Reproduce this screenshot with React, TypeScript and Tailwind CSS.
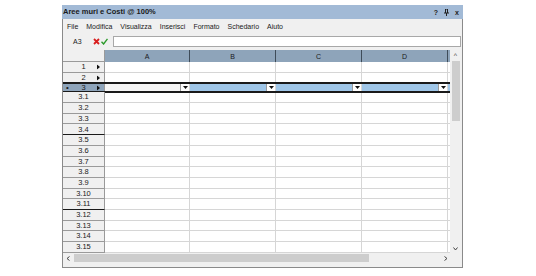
import React from 'react';

const rows = ['1', '2', '3', '3.1', '3.2', '3.3', '3.4', '3.5', '3.6', '3.7', '3.8', '3.9', '3.10', '3.11', '3.12', '3.13', '3.14', '3.15'];
const menu = ['File', 'Modifica', 'Visualizza', 'Inserisci', 'Formato', 'Schedario', 'Aiuto'];
const cols = [
  { label: 'A', cls: 'w-[85px]' },
  { label: 'B', cls: 'w-[86px]' },
  { label: 'C', cls: 'w-[86px]' },
  { label: 'D', cls: 'w-[86px]' },
];

function Arrow() {
  return (
    <svg width="4" height="5" viewBox="0 0 4 5" className="absolute right-[3px] top-1/2 -translate-y-1/2">
      <path d="M0 0 L3 2.5 L0 5 Z" fill="#111" />
    </svg>
  );
}

function Dropdown() {
  return (
    <div className="ml-auto h-full w-[9px] bg-white border-l border-[#9a9a9a] flex items-center justify-center">
      <svg width="5" height="3" viewBox="0 0 5 3">
        <path d="M0 0 H5 L2.5 3 Z" fill="#111" />
      </svg>
    </div>
  );
}

export default function App() {
  return (
    <div className="w-[536px] h-[276px] bg-white relative" style={{ fontFamily: '"Liberation Sans", Arial, sans-serif' }}>
      <div className="absolute left-[62px] top-[5px] w-[401px] h-[263px] border border-[#8a8a8a] border-t-0 flex flex-col bg-[#f0f0f0]">
        {/* title bar */}
        <div className="h-[14px] bg-[#a2bad6] flex items-center pl-[1px] pr-[4px] -mx-px">
          <span className="text-[7.5px] font-bold text-[#1a1a1a] leading-none">Aree muri e Costi @ 100%</span>
          <div className="ml-auto flex items-center gap-[6px] text-[7px] font-bold text-[#222] leading-none">
            <span>?</span>
            <svg width="5" height="7" viewBox="0 0 5 7">
              <path d="M1 0 H4 M1.5 0 V4 M3.5 0 V4 M0 4 H5 M2.5 4 V7" stroke="#222" strokeWidth="1" fill="none" />
            </svg>
            <span>x</span>
          </div>
        </div>
        {/* menu */}
        <div className="h-[14px] flex items-center gap-[8px] pl-[4px] text-[7px] text-[#1a1a1a] leading-none">
          {menu.map(m => (
            <span key={m}>{m}</span>
          ))}
        </div>
        {/* formula bar */}
        <div className="h-[17px] flex items-center">
          <span className="w-[30px] text-left text-[7px] text-[#222] leading-none pl-[10px]">A3</span>
          <svg width="7" height="7" viewBox="0 0 7 7">
            <path d="M1 1 L6 6 M6 1 L1 6" stroke="#d81e1e" strokeWidth="1.8" />
          </svg>
          <svg width="7" height="7" viewBox="0 0 7 7" className="ml-[1px]">
            <path d="M0.5 3.8 L2.6 6 L6.5 0.8" stroke="#2a9a2a" strokeWidth="1.4" fill="none" />
          </svg>
          <div className="ml-[5px] mr-[1px] flex-1 h-[11px] bg-white border border-[#a8a8a8]" />
        </div>
        {/* grid */}
        <div className="flex">
          <div className="w-[387px] bg-white">
            {/* header */}
            <div className="flex h-[12px]">
              <div className="w-[42px] bg-[#f0f0f0] border-r border-b border-[#9a9a9a]" />
              {cols.map(c => (
                <div key={c.label} className={`${c.cls} bg-[#8ea4ba] border-r border-[#3f4c59] flex items-center justify-center text-[7px] text-[#1a1a1a] leading-none`}>
                  {c.label}
                </div>
              ))}
              <div className="w-[2px] bg-[#8ea4ba]" />
            </div>
            {/* rows */}
            {rows.map(r => {
              const sel = r === '3';
              const thick = r === '3.4' || r === '3.11';
              return (
                <div
                  key={r}
                  className={`flex ${sel ? 'h-[11px] border-y-2 border-[#1a1a1a] -my-px relative' : 'h-[10.7px]'}`}
                >
                  <div
                    className={`w-[42px] relative flex items-center justify-center text-[7.5px] text-[#1a1a1a] leading-none border-r border-[#9a9a9a] ${sel ? 'bg-[#8ea4ba]' : 'bg-[#f0f0f0] border-b'} ${thick ? 'border-b-[#1a1a1a]' : 'border-b-[#9a9a9a]'}`}
                  >
                    {sel && <span className="absolute left-[3px] text-[8px]">•</span>}
                    {r}
                    {(r === '1' || r === '2' || sel) && <Arrow />}
                  </div>
                  {cols.map((c, i) => (
                    <div
                      key={c.label}
                      className={`${c.cls} flex border-r border-[#d6d6d6] ${sel ? (i === 0 ? 'bg-[#f4f4f4]' : 'bg-[#9fc6e8]') : 'border-b'}`}
                    >
                      {sel && <Dropdown />}
                    </div>
                  ))}
                  <div className={`w-[2px] ${sel ? 'bg-[#9fc6e8]' : 'border-b border-[#d6d6d6]'}`} />
                </div>
              );
            })}
          </div>
          {/* vertical scrollbar */}
          <div className="w-[11px] bg-[#f0f0f0] flex flex-col items-center">
            <span className="h-[10px] text-[7px] leading-[12px] text-[#444]">^</span>
            <div className="mt-[1px] w-[8px] h-[60px] bg-[#cdcdcd]" />
            <div className="flex-1" />
            <svg width="5" height="4" viewBox="0 0 5 4" className="mb-[2px]">
              <path d="M0.5 0.5 L2.5 3 L4.5 0.5" stroke="#444" strokeWidth="1" fill="none" />
            </svg>
          </div>
        </div>
        {/* horizontal scrollbar */}
        <div className="flex h-[11px]">
          <div className="w-[387px] flex items-center bg-[#f0f0f0]">
            <svg width="4" height="5" viewBox="0 0 4 5" className="ml-[3px]">
              <path d="M3.5 0.5 L1 2.5 L3.5 4.5" stroke="#444" strokeWidth="1" fill="none" />
            </svg>
            <div className="ml-[4px] w-[295px] h-[8px] bg-[#cdcdcd]" />
            <div className="flex-1" />
            <svg width="4" height="5" viewBox="0 0 4 5" className="mr-[2px]">
              <path d="M0.5 0.5 L3 2.5 L0.5 4.5" stroke="#444" strokeWidth="1" fill="none" />
            </svg>
          </div>
          <div className="w-[11px] bg-[#f0f0f0]" />
        </div>
      </div>
    </div>
  );
}
